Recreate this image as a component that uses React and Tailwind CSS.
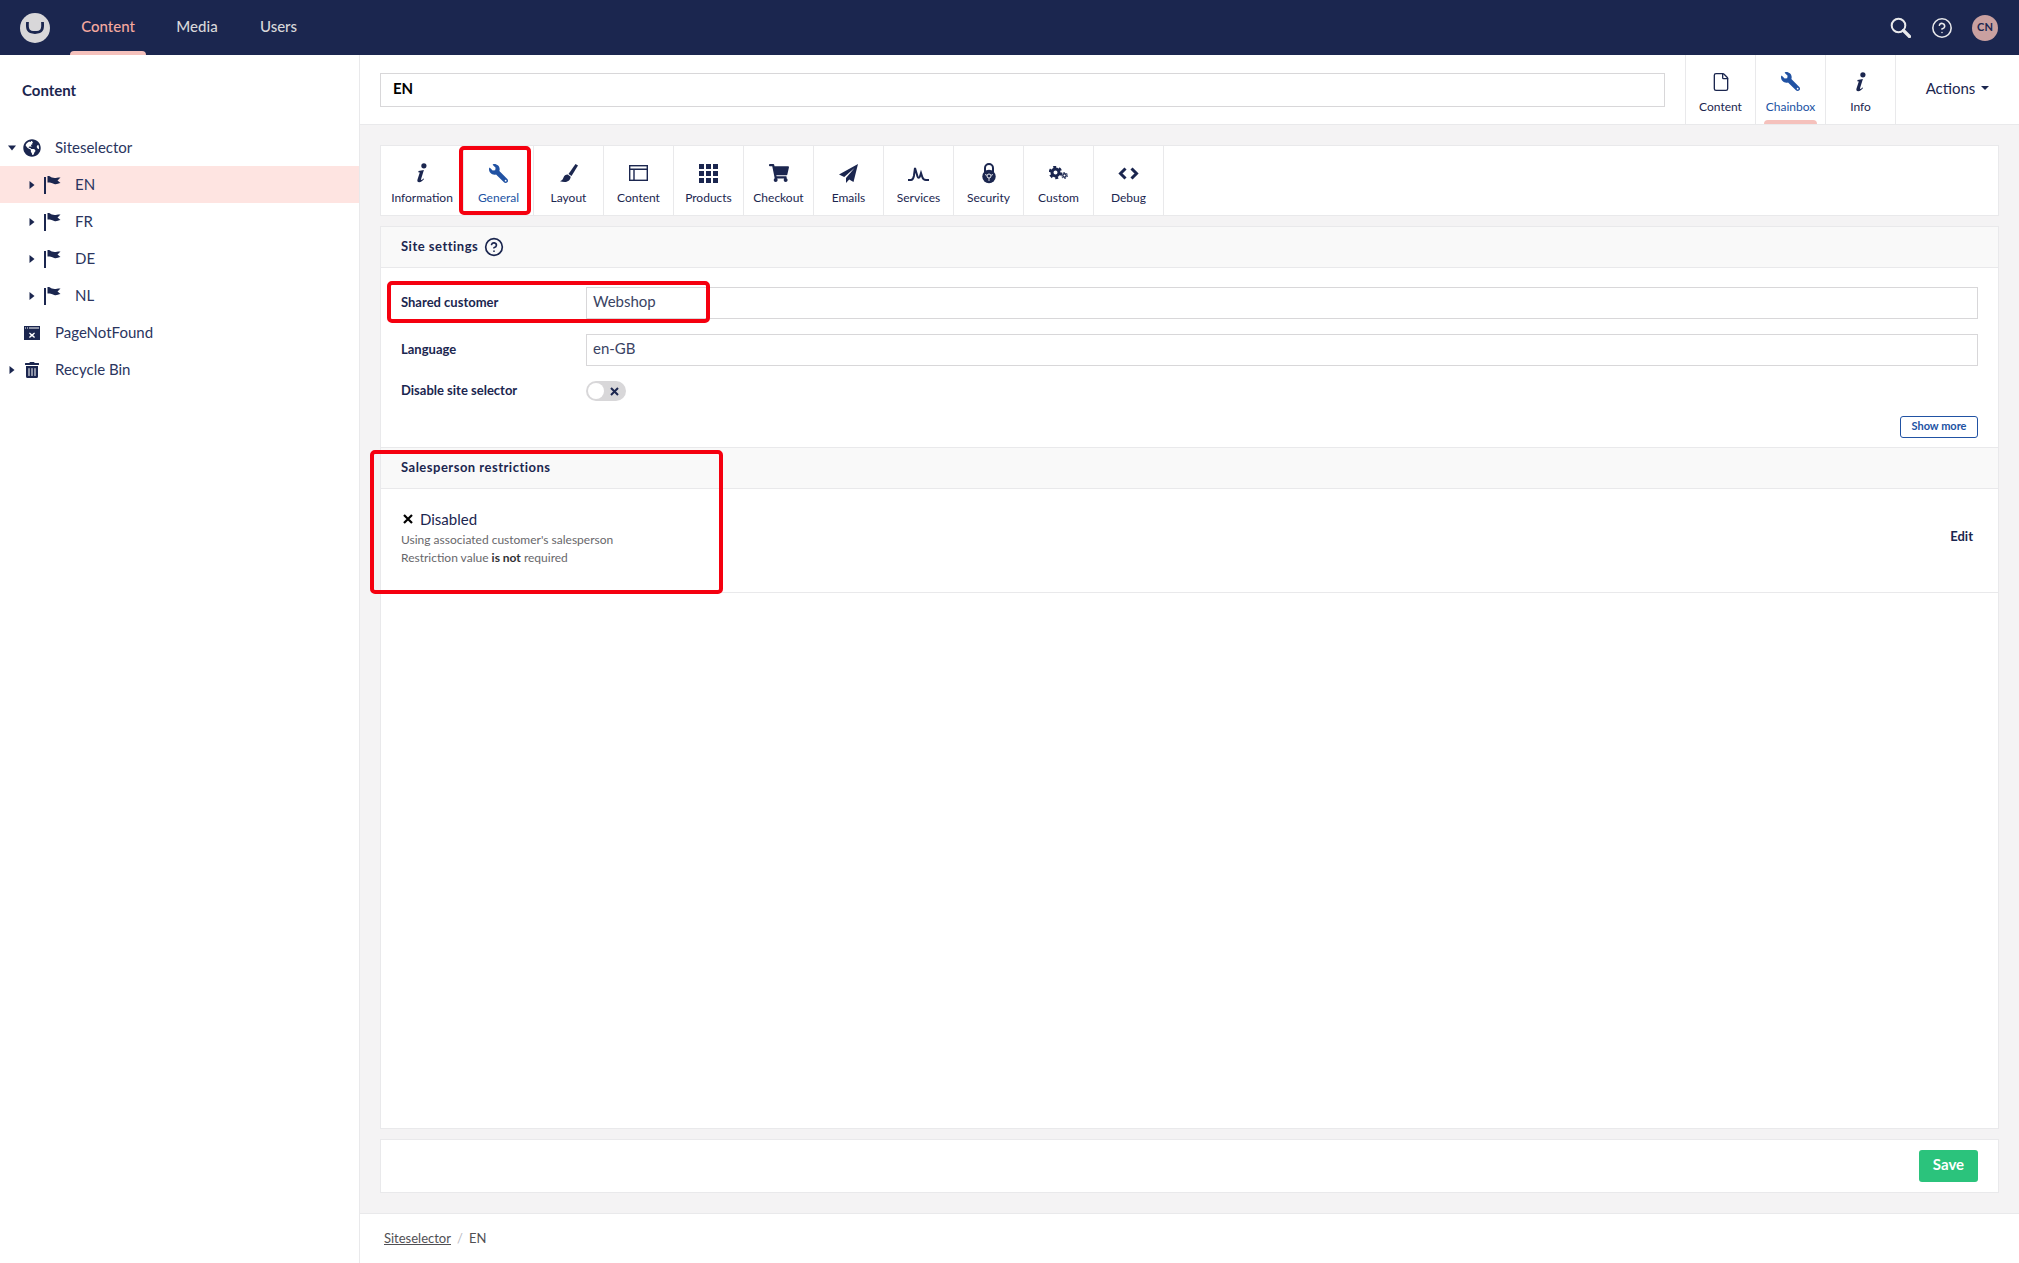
import React from "react";
import { CircleHelp, File } from "lucide-react";
import { FaGlobeAmericas, FaWrench, FaShoppingCart, FaTrashAlt } from "react-icons/fa";

const navy = "#1b264f";

const SearchIcon = () => (
  <svg width="21" height="21" viewBox="0 0 21 21" fill="none" stroke="#e9e9eb">
    <circle cx="8.500" cy="8.500" r="6.800" strokeWidth="2" />
    <path d="M13.500 13.500l6 6" strokeWidth="3.200" strokeLinecap="round" />
  </svg>
);

const Flag = () => (
  <svg width="17" height="18" viewBox="0 0 17 18" fill="#1b264f">
    <rect x="0" y="1" width="2" height="17" />
    <path d="M3.500 0c2.200-.4 3 1 4.500 1.600 1.800.7 3.500.5 5 .2 1-.2 2-.4 3.500-.2l-3 3 3 2.500c-2 .5-3.700 1.300-5.500 1.100-2.200-.3-3-2-7.500-1.700z" />
  </svg>
);

const Caret = ({ open }) => (
  <svg width="8" height="8" viewBox="0 0 8 8" fill="#1b264f">
    {open ? <path d="M0 1.500h8L4 6.500z" /> : <path d="M1.500 0v8L6.500 4z" />}
  </svg>
);

const InfoIcon = () => (
  <svg width="10" height="20" viewBox="0 0 10 20" fill="#1b264f">
    <circle cx="6.900" cy="2.800" r="2.600" />
    <path d="M1.500 8L6.900 7 4.100 16c-.3 1 .5 1.100 1 .7l1.300-1.200.7.6C5.600 18 4 19.300 2.200 19.300.5 19.300 0 18 .5 16.500L2.800 9.500 1.300 9.200z" />
  </svg>
);

const BrushIcon = () => (
  <svg width="18" height="18" viewBox="0 0 18 18" fill="#1b264f">
    <path d="M15.500 0L18 1.500 11.500 12l-3-2z" />
    <path d="M7.700 10.500l3 2.200c-.3 2.800-2.200 5.300-6 5.300-1.700 0-3.300-.3-4.700-.8 2.300-.6 2.800-2 3.500-3.700.7-1.700 2-3 4.200-3z" />
  </svg>
);

const LayoutIcon = () => (
  <svg width="19" height="16" viewBox="0 0 19 16" fill="none" stroke="#1b264f" strokeWidth="1.400">
    <rect x="0.700" y="0.700" width="17.600" height="14.600" />
    <path d="M0.700 4.300h17.600M5 4.300v11" />
  </svg>
);

const GridIcon = () => (
  <svg width="19" height="19" viewBox="0 0 19 19" fill="#1b264f">
    {[0, 7, 14].map((y) =>
      [0, 7, 14].map((x) => <rect key={`${x}-${y}`} x={x} y={y} width="5" height="5" />)
    )}
  </svg>
);

const PlaneIcon = () => (
  <svg width="19" height="19" viewBox="0 0 19 19" fill="#1b264f">
    <path d="M19 0L0 10.500l5.200 2.500L15.500 4 7 14v5l3.200-3.600 4.300 2.600z" />
  </svg>
);

const ServicesIcon = () => (
  <svg width="21" height="16" viewBox="0 0 21 16" fill="none" stroke="#1b264f" strokeWidth="2">
    <path d="M0 15h3c1.500 0 2.300-1 2.900-4L7 3l2.500 8.500c.5 1.800 1.800 1.800 2.400 0L13 8l1.300 4c.6 2 1.700 3 3.700 3h3" />
  </svg>
);

const LockIcon = () => (
  <svg width="14" height="21" viewBox="0 0 14 21">
    <path d="M3 9V5a4 4 0 0 1 8 0v4" fill="none" stroke="#1b264f" strokeWidth="2" />
    <circle cx="7" cy="13.500" r="6.700" fill="#1b264f" />
    <circle cx="7" cy="13" r="2" fill="none" stroke="#fff" strokeWidth="0.900" />
    <path d="M7 15v3M3 11.500l2 .8M11 11.500l-2 .8" stroke="#fff" strokeWidth="0.800" />
  </svg>
);

const GearsIcon = () => (
  <svg width="19" height="14" viewBox="0 0 19 14" fill="none" stroke="#1b264f">
    <circle cx="6.500" cy="6.500" r="3.500" strokeWidth="3" />
    <circle cx="6.500" cy="6.500" r="5.500" strokeWidth="2.500" strokeDasharray="2.900 2.860" />
    <circle cx="15.500" cy="9.500" r="1.700" strokeWidth="1.400" />
    <circle cx="15.500" cy="9.500" r="3" strokeWidth="1" strokeDasharray="1.600 1.540" />
  </svg>
);

const CodeIcon = () => (
  <svg width="21" height="13" viewBox="0 0 21 13" fill="none" stroke="#1b264f" strokeWidth="3">
    <path d="M7.500 1.500l-5 5 5 5M13.500 1.500l5 5-5 5" />
  </svg>
);

const PageNotFoundIcon = () => (
  <svg width="16" height="14" viewBox="0 0 16 14" fill="#1b264f">
    <path d="M0 0h16v14H0z" />
    <path d="M1 1.500h1v1H1zM3 1.500h1v1H3zM5 1.500h10v1H5z" fill="#fff" />
    <path d="M5.800 6.500l2.200 1.700 2.200-1.700.8.800-1.800 1.900 1.800 1.900-.8.800L8 10.200l-2.200 1.700-.8-.8 1.800-1.900L5 7.300z" fill="#fff" />
  </svg>
);

const tabs = [
  { label: "Information", icon: <InfoIcon />, wide: true },
  { label: "General", icon: <FaWrench size={19} color="#2152a3" className="-scale-x-100" />, active: true },
  { label: "Layout", icon: <BrushIcon /> },
  { label: "Content", icon: <LayoutIcon /> },
  { label: "Products", icon: <GridIcon /> },
  { label: "Checkout", icon: <FaShoppingCart size={20} color={navy} /> },
  { label: "Emails", icon: <PlaneIcon /> },
  { label: "Services", icon: <ServicesIcon /> },
  { label: "Security", icon: <LockIcon /> },
  { label: "Custom", icon: <GearsIcon /> },
  { label: "Debug", icon: <CodeIcon /> },
];

const TreeRow = ({ label, icon, indent, caret, open, active }) => (
  <div className={`h-[37px] flex items-center ${active ? "bg-[#fee4e1]" : ""}`}>
    <div className={`flex items-center ${indent ? "w-[75px] pl-[28px]" : "w-[55px] pl-2"}`}>
      <div className={`flex ${indent ? "w-[16px]" : "w-[15px]"}`}>{caret && <Caret open={open} />}</div>
      <div className={`flex justify-center ${indent ? "w-[17px]" : "w-[18px]"}`}>{icon}</div>
    </div>
    <span className="text-[15px] text-[#2a3560]">{label}</span>
  </div>
);

const Field = ({ label, value, first }) => (
  <div className={`flex items-center h-[32px] ${first ? "" : "mt-[15px]"}`}>
    <label className="w-[205px] text-[13px] font-bold text-[#1b264f] pl-5 pb-[1px]">{label}</label>
    <div className="flex-1 mr-5 h-[32px] border border-[#d8d7d9] flex items-center px-[6px] pb-[3px] text-[15px] text-[#3a4363]">
      {value}
    </div>
  </div>
);

const Redbox = ({ className }) => (
  <div className={`absolute border-[4px] border-[#f5000f] rounded-[5px] pointer-events-none ${className}`} />
);

export default function App() {
  return (
    <div className="relative h-[1263px] w-[2019px] overflow-hidden flex flex-col bg-white font-['Lato','Open_Sans',sans-serif] text-[#1b264f]">
      {/* Top bar */}
      <header className="h-[55px] bg-[#1b264f] flex items-center shrink-0">
        <div className="ml-5 w-[30px] h-[30px] rounded-full bg-[#d8d7d9] flex items-center justify-center">
          <svg width="20" height="13" viewBox="0 0 20 13" fill="none" stroke="#1b264f" strokeWidth="2.800">
            <path d="M2.500 1c-.6 7 .2 10.500 7.500 10.500S18.100 8 17.500 1" />
          </svg>
        </div>
        <nav className="flex h-full ml-[20px] text-[15px] font-medium">
          <div className="relative w-[76px] flex items-center justify-center pb-[3px] text-[#f5a99f]">
            Content
            <div className="absolute bottom-0 left-0 right-0 h-[4px] rounded-t bg-[#f5c1bc]" />
          </div>
          <div className="ml-[30px] w-[42px] flex items-center justify-center pb-[3px] text-[#d8d7d9]">Media</div>
          <div className="ml-[42px] w-[37px] flex items-center justify-center pb-[3px] text-[#d8d7d9]">Users</div>
        </nav>
        <div className="ml-auto flex items-center text-[#e9e9eb]">
          <SearchIcon />
          <CircleHelp size={22} strokeWidth={1.700} className="ml-[20px]" />
          <div className="ml-[19px] mr-[21px] w-[26px] h-[26px] rounded-full bg-[#c9a0a0] flex items-center justify-center text-[11px] font-bold text-[#1b264f]">
            CN
          </div>
        </div>
      </header>

      <div className="flex flex-1 min-h-0">
        {/* Sidebar */}
        <aside className="w-[360px] shrink-0 border-r border-[#e9e9eb] bg-white">
          <div className="pl-[22px] pt-[25px] h-[74px] text-[15px] font-bold text-[#1b264f] leading-[20px]">Content</div>
          <div>
            <TreeRow label="Siteselector" caret open icon={<FaGlobeAmericas size={18} color={navy} />} />
            <TreeRow label="EN" indent caret active icon={<Flag />} />
            <TreeRow label="FR" indent caret icon={<Flag />} />
            <TreeRow label="DE" indent caret icon={<Flag />} />
            <TreeRow label="NL" indent caret icon={<Flag />} />
            <TreeRow label="PageNotFound" icon={<PageNotFoundIcon />} />
            <TreeRow label="Recycle Bin" caret icon={<FaTrashAlt size={16} color={navy} />} />
          </div>
        </aside>

        {/* Main */}
        <main className="flex-1 min-w-0 flex flex-col bg-[#f4f3f4]">
          <div className="h-[70px] shrink-0 bg-white border-b border-[#e9e9eb] flex items-stretch">
            <div className="flex-1 flex items-center pl-5 pr-5">
              <div className="w-full h-[34px] border border-[#d8d7d9] flex items-center px-3 pb-[2px] text-[15px] font-bold text-black">EN</div>
            </div>
            <div className="w-[70px] border-l border-[#e9e9eb] flex flex-col items-center pt-[17px]">
              <File size={20} strokeWidth={1.600} color={navy} />
              <span className="mt-[6px] text-[12px] text-[#1b264f]">Content</span>
            </div>
            <div className="relative w-[70px] border-l border-[#e9e9eb] flex flex-col items-center pt-[17px]">
              <FaWrench size={19} color="#2152a3" className="-scale-x-100" />
              <span className="mt-[7px] text-[12px] text-[#2152a3]">Chainbox</span>
              <div className="absolute bottom-0 left-2 right-2 h-[4px] rounded-t bg-[#f5c1bc]" />
            </div>
            <div className="w-[70px] border-l border-[#e9e9eb] flex flex-col items-center pt-[17px]">
              <InfoIcon />
              <span className="mt-[6px] text-[12px] text-[#1b264f]">Info</span>
            </div>
            <div className="w-[124px] border-l border-[#e9e9eb] flex items-center justify-center gap-[6px] pb-[3px] text-[15px] text-[#1b264f]">
              Actions
              <svg width="8" height="4" viewBox="0 0 8 4" fill="#1b264f"><path d="M0 0h8L4 4z" /></svg>
            </div>
          </div>

          <div className="flex-1 min-h-0 flex flex-col px-5 pt-5">
            {/* Tabs */}
            <div className="h-[71px] shrink-0 bg-white border border-[#e9e9eb] flex">
              {tabs.map((t) => (
                <div key={t.label} className={`border-r border-[#e9e9eb] flex flex-col items-center ${t.wide ? "w-[83px]" : "w-[70px]"}`}>
                  <div className="h-[40px] pt-[14px] flex items-center justify-center">{t.icon}</div>
                  <span className={`mt-[5px] text-[12px] leading-[14px] ${t.active ? "text-[#2152a3]" : "text-[#1b264f]"}`}>{t.label}</span>
                </div>
              ))}
            </div>

            {/* Settings */}
            <div className="mt-[10px] flex-1 min-h-0 bg-white border border-[#e9e9eb]">
              <div className="h-[41px] bg-[#f9f9f9] border-b border-[#e9e9eb] flex items-center pl-5">
                <span className="text-[13px] font-bold tracking-[0.5px] text-[#1b264f]">Site settings</span>
                <CircleHelp size={20} strokeWidth={2} className="ml-[6px]" />
              </div>
              <div className="pt-[19px]">
                <Field first label="Shared customer" value="Webshop" />
                <Field label="Language" value="en-GB" />
                <div className="flex items-center mt-[15px] h-[20px]">
                  <label className="w-[205px] text-[13px] font-bold text-[#1b264f] pl-5 pb-[1px]">Disable site selector</label>
                  <div className="w-[40px] h-[20px] rounded-full bg-[#d8d7d9] flex items-center pl-[2px]">
                    <div className="w-[16px] h-[16px] rounded-full bg-white" />
                    <svg className="ml-[6px]" width="9" height="9" viewBox="0 0 9 9" stroke="#1b264f" strokeWidth="2"><path d="M1 1l7 7M8 1L1 8" /></svg>
                  </div>
                </div>
                <div className="flex justify-end pr-5 mt-[15px]">
                  <div className="w-[78px] h-[22px] border border-[#2152a3] rounded-[3px] flex items-center justify-center pb-[1px] text-[11px] font-bold text-[#2152a3]">Show more</div>
                </div>
              </div>
              <div className="mt-[9px] h-[42px] bg-[#f9f9f9] border-y border-[#e9e9eb] flex items-center pl-5 pb-[1px]">
                <span className="text-[13px] font-bold tracking-[0.5px] text-[#1b264f]">Salesperson restrictions</span>
              </div>
              <div className="h-[104px] border-b border-[#e9e9eb] flex items-start justify-between pl-5 pr-[25px] pt-[20px]">
                <div>
                  <div className="flex items-center text-[15px] leading-[20px] text-[#1b264f]">
                    <svg className="ml-[2px] mr-[7px]" width="10" height="10" viewBox="0 0 10 10" stroke="#000" strokeWidth="2.200"><path d="M1 1l8 8M9 1L1 9" /></svg>
                    Disabled
                  </div>
                  <div className="mt-[2px] text-[12px] leading-[18px] text-[#68676b]">Using associated customer's salesperson</div>
                  <div className="text-[12px] leading-[18px] text-[#68676b]">Restriction value <b className="text-[#303033]">is not</b> required</div>
                </div>
                <span className="mt-[17px] text-[13px] leading-[20px] font-bold text-[#1b264f]">Edit</span>
              </div>
            </div>

            {/* Save bar */}
            <div className="mt-[10px] h-[54px] shrink-0 bg-white border border-[#e9e9eb] flex items-center justify-end pr-5">
              <div className="w-[59px] h-[32px] rounded-[3px] bg-[#2bc37c] flex items-center justify-center pb-[3px] text-[15px] font-bold text-white">Save</div>
            </div>
            <div className="h-[20px] shrink-0" />
          </div>

          {/* Breadcrumb */}
          <div className="h-[50px] shrink-0 bg-white border-t border-[#e9e9eb] flex items-center pl-[24px] text-[13px] text-[#515054]">
            <span className="underline">Siteselector</span>
            <span className="mx-[6px] text-[#bbbabf]">/</span>
            <span>EN</span>
          </div>
        </main>
      </div>

      {/* Annotation boxes drawn over the screenshot */}
      <Redbox className="left-[459px] top-[146px] w-[72px] h-[69px]" />
      <Redbox className="left-[387px] top-[281px] w-[323px] h-[42px]" />
      <Redbox className="left-[370px] top-[450px] w-[353px] h-[144px]" />
    </div>
  );
}
